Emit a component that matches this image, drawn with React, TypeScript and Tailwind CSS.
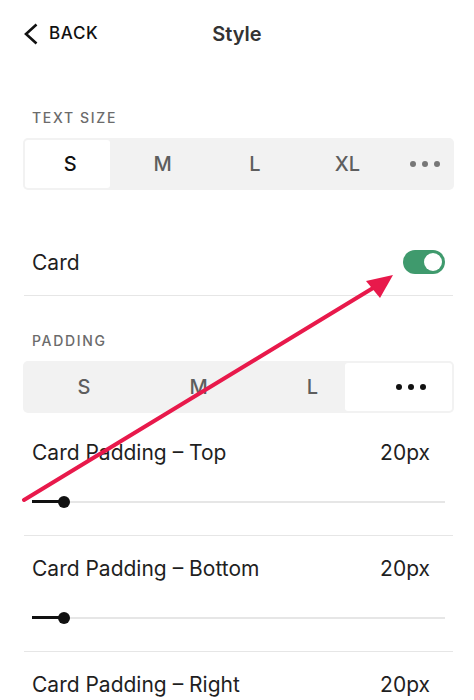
type Seg = { label: string; shift: string };

const textSizes: Seg[] = [
  { label: "S", shift: "pl-[5px]" },
  { label: "M", shift: "pl-[19px]" },
  { label: "L", shift: "pl-[33px]" },
  { label: "XL", shift: "pl-[47px]" },
  { label: "dots", shift: "pl-[31px]" },
];

const paddings: Seg[] = [
  { label: "S", shift: "pl-[11px]" },
  { label: "M", shift: "pl-[27px]" },
  { label: "L", shift: "pl-[41px]" },
  { label: "dots", shift: "pl-[25px]" },
];

const sliders = ["Top", "Bottom", "Right"];

function Dots() {
  return (
    <span className="flex items-center gap-[6px]">
      <span className="w-[6px] h-[6px] rounded-full bg-current" />
      <span className="w-[6px] h-[6px] rounded-full bg-current" />
      <span className="w-[6px] h-[6px] rounded-full bg-current" />
    </span>
  );
}

function Segmented({ items, active, cols }: { items: Seg[]; active: number; cols: string }) {
  return (
    <div className={`grid ${cols} h-[52px] ml-[23px] mr-[20px] rounded-[5px] bg-[#f2f2f2] p-[2px]`}>
      {items.map((item, i) => (
        <div
          key={item.label}
          className={`flex items-center justify-center rounded-[3px] text-[20px] font-medium ${item.shift} ${
            i === active ? "bg-white text-[#111]" : item.label === "dots" ? "text-[#777]" : "text-[#5e5e5e]"
          }`}
        >
          {item.label === "dots" ? <Dots /> : item.label}
        </div>
      ))}
    </div>
  );
}

function SectionLabel({ children }: { children: string }) {
  return (
    <div className="px-8 h-[20px] leading-[20px] text-[14px] font-medium tracking-[0.12em] text-[#6b6b6b] uppercase">
      {children}
    </div>
  );
}

export default function App() {
  return (
    <main
      className="relative w-[474px] h-[700px] overflow-hidden bg-white text-[#1f1f1f]"
      style={{ fontFamily: "Inter, 'Liberation Sans', sans-serif" }}
    >
      <header className="grid grid-cols-3 items-center h-[68px]">
        <div className="flex items-center pl-[24px] gap-[11px]">
          <svg width="14" height="22" viewBox="0 0 14 22" className="text-[#111]">
            <polyline points="12.5,1.5 2,11 12.5,20.5" fill="none" stroke="currentColor" strokeWidth="2.6" strokeLinejoin="miter" />
          </svg>
          <span className="text-[17px] font-medium tracking-[0.04em] text-[#111]">BACK</span>
        </div>
        <div className="text-center text-[20px] font-semibold text-[#333]">Style</div>
        <div />
      </header>

      <div className="mt-[40px] mb-[10px]">
        <SectionLabel>Text Size</SectionLabel>
      </div>
      <Segmented items={textSizes} active={0} cols="grid-cols-5" />

      <div className="ml-[24px] mr-[21px] flex items-start justify-between h-[106px] pt-[60px] border-b border-[#e6e6e6]">
        <span className="pl-2 h-[26px] leading-[26px] text-[21px]">Card</span>
        <span className="relative mr-[8px] w-[42px] h-[24px] rounded-full bg-[#3f9a6d]">
          <span className="absolute right-[3px] top-[3px] w-[18px] h-[18px] rounded-full bg-white" />
        </span>
      </div>

      <div className="mt-[35px] mb-[10px]">
        <SectionLabel>Padding</SectionLabel>
      </div>
      <Segmented items={paddings} active={3} cols="grid-cols-4" />

      {sliders.map((side, i) => (
        <div
          key={side}
          className={`ml-[24px] mr-[21px] border-b border-[#e6e6e6] ${i === 0 ? "h-[123px] pt-[27px]" : "h-[116px] pt-[20px]"}`}
        >
          <div className="flex items-center justify-between pl-2 pr-[23px] h-[26px] text-[21px]">
            <span>Card Padding – {side}</span>
            <span>20px</span>
          </div>
          <div className="relative ml-2 mr-[8px] mt-[35px] h-[2px] bg-[#e6e6e6]">
            <div className="absolute left-0 top-[-1px] w-[32px] h-[3px] bg-[#111]" />
            <div className="absolute left-[26px] top-[-5px] w-[12px] h-[12px] rounded-full bg-[#111]" />
          </div>
        </div>
      ))}

      <svg className="absolute inset-0 pointer-events-none" width="474" height="700">
        <line x1="24" y1="500" x2="378" y2="285" stroke="#e8194b" strokeWidth="4" strokeLinecap="round" />
        <polygon points="393,275 366,281 380,298" fill="#e8194b" />
      </svg>
    </main>
  );
}
